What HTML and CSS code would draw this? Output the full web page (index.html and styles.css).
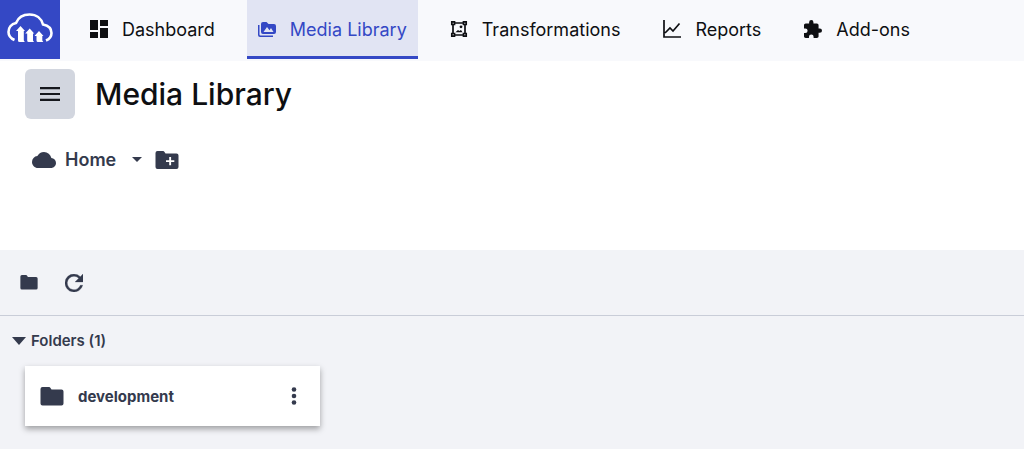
FILE: index.html
```html
<!DOCTYPE html>
<html lang="en">
<head>
<meta charset="utf-8">
<title>Media Library</title>
<link rel="stylesheet" href="styles.css">
</head>
<body>

<header class="topbar">
	<a class="logo" href="#" aria-label="Home page">
		<svg width="46" height="30" viewBox="0 0 46 30">
			<path d="M7.500 27C4 25.500 1.500 23 1.500 19C1.500 14.500 4.500 11 9 10C11 5 16 1.500 22.500 1.500C29.500 1.500 34.500 5.500 36 11.500C41 12.500 44.500 15.500 44.500 20C44.500 23.500 42.500 26 39 27.500" fill="none" stroke="#fff" stroke-width="2.600"/>
			<path d="M13.500 13l4.500 5h-1.200V27.500l1 1.500h-5.300q-1.500 0-1.500-1.500V18H9z M22.700 15.500l4.500 5H26V27.500l1 1.500h-5.300q-1.500 0-1.500-1.500v-7h-2z M32 18l4.500 5h-1.200v4.500l1 1.500H31q-1.500 0-1.500-1.500V23h-2z" fill="#fff"/>
		</svg>
	</a>
	<nav class="nav">
		<a class="nav_link" href="#">
			<svg width="18" height="18" viewBox="3 3 18 18"><path d="M3 13h8V3H3v10zm0 8h8v-6H3v6zm10 0h8V11h-8v10zm0-18v6h8V3h-8z"/></svg>
			Dashboard
		</a>
		<a class="nav_link active" href="#">
			<svg width="18" height="18" viewBox="0 0 18 18"><path fill-rule="evenodd" d="M0 5h1.500v9.500q0 1 1 1H15V17H2Q0 17 0 15zM3 4q0-2 2-2h3.500l2 2H16q2 0 2 2v6q0 2-2 2H5q-2 0-2-2zM5.500 12h10l-2.500-4-1.500 2.200L9 7z"/></svg>
			Media Library
		</a>
		<a class="nav_link" href="#">
			<svg width="18" height="18" viewBox="0 0 18 18">
				<path d="M3 5v8M15 5v8M5 3h8M5 15h8M1.800 1.800h2.700v2.700H1.800zM13.500 1.800h2.700v2.700h-2.700zM1.800 13.500h2.700v2.700H1.800zM13.500 13.500h2.700v2.700h-2.700z" fill="none" stroke="currentColor" stroke-width="1.700"/>
				<path d="M5.500 12.300l2.500-2.300 1.300 1 1.700-1 1.500 2.300z"/><circle cx="11" cy="6.800" r="1.400"/>
			</svg>
			Transformations
		</a>
		<a class="nav_link" href="#">
			<svg width="18" height="18" viewBox="0 0 18 18"><path d="M1 0v17h17M2 13l5-5 3 3 6.500-7.500" fill="none" stroke="currentColor" stroke-width="1.700"/></svg>
			Reports
		</a>
		<a class="nav_link" href="#">
			<svg width="18" height="18" viewBox="2 1 21 21"><path d="M20.500 11H19V7c0-1.100-.9-2-2-2h-4V3.500a2.500 2.500 0 0 0-5 0V5H4c-1.100 0-2 .9-2 2v3.800h1.500a2.700 2.700 0 0 1 0 5.400H2V20c0 1.100.9 2 2 2h3.800v-1.500a2.700 2.700 0 0 1 5.400 0V22H17c1.100 0 2-.9 2-2v-4h1.500a2.500 2.500 0 0 0 0-5z"/></svg>
			Add-ons
		</a>
	</nav>
</header>

<section class="heading">
	<div class="title_row">
		<button type="button" class="menu_btn" aria-label="Menu">
			<svg width="20" height="14" viewBox="0 0 20 14"><path d="M0 0h20v2.300H0zM0 5.900h20v2.200H0zM0 11.700h20V14H0z"/></svg>
		</button>
		<h1>Media Library</h1>
	</div>
	<div class="crumbs">
		<button type="button" class="home_btn">
			<svg width="24" height="16" viewBox="0 4 24 16"><path d="M19.350 10.040A7.490 7.490 0 0 0 12 4C9.110 4 6.600 5.640 5.350 8.040A5.994 5.994 0 0 0 0 14c0 3.310 2.690 6 6 6h13c2.760 0 5-2.240 5-5 0-2.640-2.050-4.780-4.650-4.960z"/></svg>
			Home
			<svg class="caret" width="10" height="5" viewBox="0 0 10 5"><path d="M0 0h10L5 5z"/></svg>
		</button>
		<button type="button" aria-label="New folder">
			<svg width="24" height="20" viewBox="0 0 24 20"><path fill-rule="evenodd" d="M2.500 1H8q1 0 1.500 1l1 1.500h11q2 0 2 2V17q0 2-2 2h-19q-2 0-2-2V3q0-2 2-2zM14.200 7v3.200H11v1.900h3.200v3.200h1.900v-3.200h3.200v-1.900h-3.200V7z"/></svg>
		</button>
	</div>
</section>

<main class="library">
	<div class="toolbar">
		<button type="button" aria-label="Folders">
			<svg width="18" height="15" viewBox="0 0 24 19" preserveAspectRatio="none"><path d="M2.500 0H8q1 0 1.500 1l1 1.500h11q2 0 2 2V16.500q0 2-2 2h-19q-2 0-2-2V2q0-2 2-2z"/></svg>
		</button>
		<button type="button" aria-label="Refresh">
			<svg width="18" height="18" viewBox="4 4 16 16"><path stroke="currentColor" stroke-width=".3" d="M17.650 6.350A7.958 7.958 0 0 0 12 4a8 8 0 1 0 7.730 10h-2.080A6 6 0 1 1 12 6c1.660 0 3.140.69 4.220 1.780L13 11h7V4l-2.350 2.350z"/></svg>
		</button>
	</div>
	<details class="folders" open>
		<summary>
			<svg width="14" height="8" viewBox="0 0 14 8"><path d="M0 0h14L7 8z"/></svg>
			Folders (1)
		</summary>
		<div class="grid">
			<div class="card">
				<svg width="24" height="19" viewBox="0 0 24 19"><path d="M2.500 0H9q1 0 1.500 1l1 1.500h10q2 0 2 2V16.500q0 2-2 2h-19q-2 0-2-2V2q0-2 2-2z"/></svg>
				<a class="name" href="#">development</a>
				<button type="button" class="more" aria-label="More options">
					<svg width="6" height="20" viewBox="0 0 6 20"><circle cx="3" cy="3.500" r="2.300"/><circle cx="3" cy="10" r="2.300"/><circle cx="3" cy="16.500" r="2.300"/></svg>
				</button>
			</div>
		</div>
	</details>
</main>

</body>
</html>
```
FILE: styles.css
```css
body{
	margin:0;
	min-height:100vh;
	display:flex;
	flex-direction:column;
	background:#fff;
	color:#343a4d;
	font-family:Inter, "Liberation Sans", sans-serif;
	font-size:18px;
}
svg{
	display:block;
	flex:none;
	fill:currentColor;
}
button{
	display:flex;
	align-items:center;
	padding:0;
	border:0;
	background:none;
	color:inherit;
	font:inherit;
	cursor:pointer;
}
a{
	color:inherit;
	text-decoration:none;
}

.topbar{
	display:flex;
	padding-bottom:2px;
	background:#f8f9fc;
}
.logo{
	display:flex;
	align-items:center;
	justify-content:center;
	width:60px;
	height:59px;
	background:#3448c5;
	padding-bottom:3px;
	box-sizing:border-box;
}
.nav{
	display:flex;
	gap:21px;
	padding-left:19px;
}
.nav_link{
	display:flex;
	align-items:center;
	gap:14px;
	padding:2px 11px 0;
	border-bottom:3px solid transparent;
	color:#0e0f12;
	white-space:nowrap;
}
.nav_link.active{
	background:#e1e4f3;
	border-color:#3448c5;
	color:#3448c5;
}

.heading{
	padding:8px 25px 80px;
}
.title_row{
	display:flex;
	align-items:center;
	gap:20px;
}
.menu_btn{
	justify-content:center;
	width:50px;
	height:50px;
	border-radius:6px;
	background:#d2d6df;
	color:#16181d;
}
h1{
	margin:0;
	color:#0e0f12;
	font-size:30px;
	font-weight:500;
}
.crumbs{
	display:flex;
	align-items:center;
	gap:13px;
	padding:30px 7px 0;
}
.home_btn{
	gap:9px;
	font-weight:600;
}
.caret{
	margin-left:7px;
}

.library{
	flex:1;
	background:#f2f3f7;
}
.toolbar{
	display:flex;
	align-items:center;
	gap:27px;
	height:65px;
	padding:0 20px;
	border-bottom:1px solid #c9cdd8;
}
summary{
	display:flex;
	align-items:center;
	gap:5px;
	padding:15px 12px;
	font-size:15px;
	font-weight:600;
	line-height:20px;
	cursor:pointer;
}
.grid{
	display:grid;
	grid-template-columns:repeat(auto-fill, 295px);
	gap:20px;
	padding:0 25px 22px;
}
.card{
	display:flex;
	align-items:center;
	gap:14px;
	height:60px;
	padding:0 23px 0 15px;
	box-sizing:border-box;
	background:#fff;
	box-shadow:0 3px 6px rgba(0,0,0,0.35);
}
.name{
	flex:1;
	font-size:15px;
	font-weight:700;
}
```
